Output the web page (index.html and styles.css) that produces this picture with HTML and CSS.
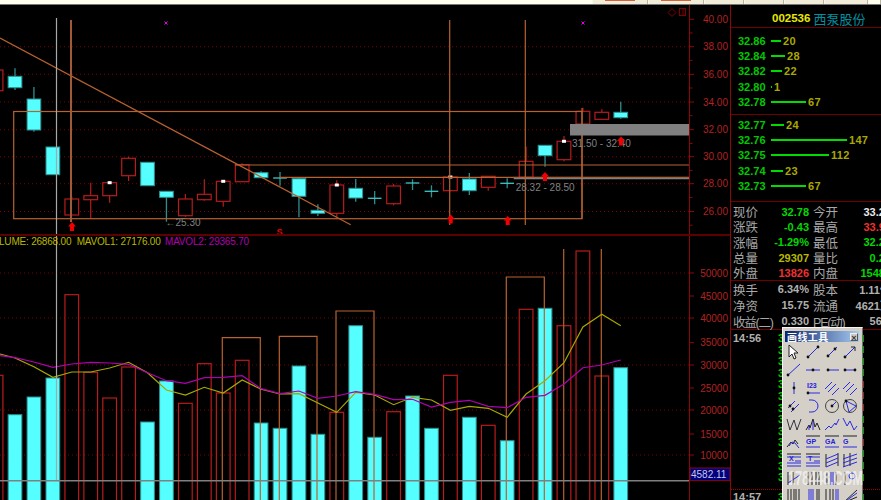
FILE: index.html
```html
<!DOCTYPE html>
<html lang="zh">
<head>
  <meta charset="UTF-8">
  <title>002536 西泵股份</title>
  <link rel="stylesheet" href="styles.css">
</head>
<body>

  <div class="topbar">
    <div class="tab tab-a"><i></i></div>
    <div class="tab tab-a"><i></i></div>
    <div class="tab tab-b"></div>
    <div class="tab tab-b"></div>
    <div class="tab tab-b"></div>
    <div class="tab tab-c"></div>
    <div class="tab tab-d"></div>
  </div>

  <div class="workspace">
    <svg id="chart" class="chart" viewBox="0 5 730 495"></svg>

    <div class="side">
      <div class="title"><span class="code">002536</span><span class="name">西泵股份</span></div>

      <div class="book book-sell">
        <div class="level"><span class="price">32.86</span><i style="width:10px"></i><span class="qty">20</span></div>
        <div class="level"><span class="price">32.84</span><i style="width:14px"></i><span class="qty">28</span></div>
        <div class="level"><span class="price">32.82</span><i style="width:11px"></i><span class="qty">22</span></div>
        <div class="level"><span class="price">32.80</span><i style="width:1px"></i><span class="qty">1</span></div>
        <div class="level"><span class="price">32.78</span><i style="width:35px"></i><span class="qty">67</span></div>
      </div>
      <div class="book book-buy">
        <div class="level"><span class="price">32.77</span><i style="width:13px"></i><span class="qty">24</span></div>
        <div class="level"><span class="price">32.76</span><i style="width:76px"></i><span class="qty">147</span></div>
        <div class="level"><span class="price">32.75</span><i style="width:58px"></i><span class="qty">112</span></div>
        <div class="level"><span class="price">32.74</span><i style="width:12px"></i><span class="qty">23</span></div>
        <div class="level"><span class="price">32.73</span><i style="width:35px"></i><span class="qty">67</span></div>
      </div>

      <div class="stats stats-quote">
        <span>现价</span><b class="green">32.78</b><span>今开</span><b class="white">33.21</b>
        <span>涨跌</span><b class="green">-0.43</b><span>最高</span><b class="red">33.95</b>
        <span>涨幅</span><b class="green">-1.29%</b><span>最低</span><b class="green">32.21</b>
        <span>总量</span><b class="yellow">29307</b><span>量比</span><b class="green">0.28</b>
        <span>外盘</span><b class="red">13826</b><span>内盘</span><b class="green">15481</b>
      </div>
      <div class="stats stats-base">
        <span>换手</span><b>6.34%</b><span>股本</span><b>1.11亿</b>
        <span>净资</span><b>15.75</b><span>流通</span><b>4621万</b>
        <span class="tight">收益(二)</span><b>0.330</b><span class="tight">PE(动)</span><b>56.1</b>
      </div>

      <div class="tape">
        <div class="tick"><span class="time">14:56</span><span class="tprice">32.78</span><i class="up"></i></div>
        <div class="tick"><span class="time"></span><span class="tprice">32.78</span><i class="up"></i></div>
        <div class="tick"><span class="time"></span><span class="tprice">32.78</span><i class="up"></i></div>
        <div class="tick"><span class="time"></span><span class="tprice">32.77</span><i class="up"></i></div>
        <div class="tick"><span class="time"></span><span class="tprice">32.78</span><i class="down"></i></div>
        <div class="tick"><span class="time"></span><span class="tprice">32.78</span><i class="down"></i></div>
        <div class="tick"><span class="time"></span><span class="tprice">32.77</span><i class="down"></i></div>
        <div class="tick"><span class="time"></span><span class="tprice">32.78</span><i class="up"></i></div>
        <div class="tick"><span class="time"></span><span class="tprice">32.78</span><i class="up"></i></div>
        <div class="tick"><span class="time"></span><span class="tprice">32.77</span><i class="down"></i></div>
        <div class="tick"><span class="time"></span><span class="tprice">32.78</span><i class="up"></i></div>
        <div class="tick"><span class="time"></span><span class="tprice">32.78</span><i class="up"></i></div>
        <div class="tick"><span class="time"></span><span class="tprice">32.78</span><i class="up"></i></div>
      </div>
      <div class="tape tape-next">
        <div class="tick"><span class="time">14:57</span><span class="tprice">32.78</span><i class="up"></i></div>
      </div>
    </div>
  </div>

  <!-- floating drawing tools window -->
  <div class="tools">
    <div class="tools-title"><span>画线工具</span><em>×</em></div>
    <div id="toolgrid" class="tools-grid"></div>
  </div>
  <div class="mark">178448.COM</div>

  <script src="chart.js"></script>
</body>
</html>
```

FILE: styles.css
```css
html, body {
  margin: 0;
  height: 100%;
}
body {
  width: 881px;
  height: 500px;
  overflow: hidden;
  background: #000;
  color: #c0c0c0;
  font-family: "Liberation Sans", "Noto Sans CJK SC", sans-serif;
  display: flex;
  flex-direction: column;
  position: relative;
}

/* top strip, only the foot of the window above shows */
.topbar {
  height: 4px;
  flex: none;
  display: flex;
  padding-left: 592px;
  background: #fffff0;
  border-bottom: 1px solid #777;
}
.tab {
  box-sizing: border-box;
  border-right: 1px solid #b8b4a0;
  border-left: 1px solid #f8f8f0;
  background: #f2edd8;
}
.tab i {
  display: block;
  width: 30px;
  height: 1px;
  margin: 0 auto;
  background: #d8603c;
}
.tab-a { width: 56px; }
.tab-b { width: 40px; }
.tab-c { width: 44px; }
.tab-d { width: 13px; background: #fffff0; }

.workspace {
  flex: 1;
  display: flex;
  min-height: 0;
}
.chart {
  width: 730px;
  height: 495px;
  flex: none;
  display: block;
}
.chart text {
  font-size: 10px;
}
.axis-label { fill: #b02222; text-anchor: end; }
.info-yellow { fill: #b8b800; letter-spacing: -.2px; }
.info-purple { fill: #b000b0; letter-spacing: -.2px; }
.note { fill: #808080; }

/* right panel */
.side {
  flex: none;
  width: 161px;
  border-left: 1px solid #8c0808;
  overflow: hidden;
  font-size: 11px;
  font-weight: bold;
}
.title {
  height: 23px;
  box-sizing: border-box;
  padding: 4px 0 0 41px;
  display: flex;
  align-items: center;
  gap: 3px;
  border-bottom: 1px solid #700000;
}
.code {
  color: #e8e800;
  font-size: 11.5px;
}
.name {
  color: #0090a0;
  font-size: 13px;
  font-weight: normal;
}
.book {
  box-sizing: border-box;
  padding-left: 7px;
}
.book-sell {
  height: 87px;
  padding-top: 5px;
  border-bottom: 1px solid #700000;
}
.book-buy {
  height: 86px;
  padding-top: 2px;
}
.level {
  height: 15.4px;
  display: flex;
  align-items: center;
}
.level i {
  height: 2px;
  background: #00dc00;
  margin-right: 2px;
}
.price {
  width: 33px;
  color: #00c800;
}
.qty {
  color: #a8a800;
  letter-spacing: .3px;
}

.stats {
  display: grid;
  grid-template-columns: 30px 46px 30px 52px;
  column-gap: 0;
  padding-left: 2px;
  align-items: center;
  white-space: nowrap;
  box-sizing: border-box;
  border-top: 1px solid #700000;
}
.stats span {
  font-size: 12.5px;
  font-weight: normal;
  color: #a8a8a8;
}
.stats span:nth-child(4n+3) {
  padding-left: 4px;
}
.stats .tight {
  letter-spacing: -1.2px;
}
.stats b {
  text-align: right;
  color: #b0b0b0;
}
.stats-quote {
  height: 79px;
  grid-auto-rows: 15.3px;
  padding-top: 2px;
}
.stats-base {
  height: 49px;
  grid-auto-rows: 16px;
}
.green { color: #00d800 !important; }
.white { color: #e8e8e8 !important; }
.red { color: #f03030 !important; }
.yellow { color: #b8b800 !important; }

.tape {
  box-sizing: border-box;
  height: 160px;
  padding-top: 2px;
  border-top: 1px solid #700000;
}
.tape-next {
  padding-top: 1px;
  height: 12px;
  border-top: 1px dotted #a00000;
}
.tick {
  height: 11.6px;
  display: grid;
  grid-template-columns: 45px 84px 2px;
  padding-left: 2px;
  align-items: center;
}
.tick i {
  height: 7px;
}
.tick .up { background: #00a000; }
.tick .down { background: #a02020; }
.time {
  color: #b0b0b0;
}
.tprice {
  color: #00c800;
}

/* floating window, lies over the panel */
.tools {
  position: absolute;
  left: 782px;
  top: 327px;
  width: 81px;
  height: 190px;
  box-sizing: border-box;
  padding: 3px 3px 0 2px;
  background: #d4d0c8;
  border-top: 1px solid #f4f4f0;
  border-left: 1px solid #f4f4f0;
  border-right: 1px solid #707070;
}
.tools-title {
  height: 11px;
  display: flex;
  align-items: center;
  justify-content: space-between;
  padding: 0 1px 0 2px;
  background: linear-gradient(90deg, #0a246a, #a6caf0);
  color: #fff;
  font-size: 10px;
  font-weight: bold;
  letter-spacing: .4px;
}
.tools-title em {
  width: 8px;
  height: 8px;
  font-style: normal;
  font-size: 9px;
  line-height: 8px;
  text-align: center;
  letter-spacing: 0;
  color: #333;
  background: #cfcbc2;
  border: 1px solid #eee;
  border-right-color: #555;
  border-bottom-color: #555;
  box-sizing: border-box;
}
.tools-grid {
  display: grid;
  grid-template-columns: repeat(4, 18.8px);
  grid-auto-rows: 18px;
  margin-top: 1px;
}
.tools-grid svg {
  width: 16px;
  height: 16px;
  margin: 1px;
  display: block;
}
.tools-grid text {
  font-size: 7px;
  font-weight: bold;
  fill: #2222dd;
}
.mark {
  position: absolute;
  left: 788px;
  top: 467px;
  transform: scaleX(.63);
  transform-origin: left top;
  font-size: 20px;
  font-weight: bold;
  color: rgba(255, 255, 255, .62);
  white-space: nowrap;
}
```

FILE: chart.js
```js
const chart = document.getElementById("chart");
const toolgrid = document.getElementById("toolgrid");

const ORANGE = "#b8622f";
const RED = "#b81c1c";
const CYAN = "#55ffff";
const TEAL = "#2f8f8f";

// kind, wick top, body top, body bottom, wick bottom, volume top, white dot
const bars = [
  ["r", 68, 70, 90.7, 92, 375.3],
  ["c", 68.3, 76.3, 87.7, 90, 414.7],
  ["c", 87, 99, 130, 131.7, 397],
  ["c", 147, 147, 174.7, 174.7, 378],
  ["r", 196.7, 199, 215, 215, 294.7],
  ["r", 182.7, 195.7, 199.7, 218.3, 372.3],
  ["r", 181, 182.7, 195.7, 202.7, 398, 1],
  ["r", 156.7, 158.3, 175.7, 181, 367],
  ["c", 162.3, 162.3, 185.7, 185.7, 422],
  ["c", 191.3, 191.3, 197.3, 221.7, 381],
  ["r", 194, 199, 215.7, 216.7, 403.3],
  ["r", 179.3, 194.3, 199.7, 200.7, 363.7],
  ["r", 180, 181.3, 201.3, 206.7, 393, 1],
  ["r", 163.3, 164.7, 181.7, 181.7, 360.3],
  ["c", 171.3, 172.7, 177.7, 177.7, 423],
  ["x", 172, 178, 178, 185.7, 428.3],
  ["c", 177.7, 178.7, 196.3, 217.3, 366],
  ["c", 204.3, 210.3, 213.3, 216, 434.3],
  ["r", 180.3, 185, 213.3, 217.3, 412.3, 1],
  ["c", 179, 188.3, 198, 201.7, 325.7],
  ["x", 191, 198.3, 198.3, 204.3, 437.3],
  ["r", 184, 186, 203.7, 205.3, 411.7],
  ["x", 179.3, 183, 183, 190, 396],
  ["x", 185.3, 191.3, 191.3, 197.3, 428.3],
  ["r", 176, 177, 190.7, 190.7, 375.3, 1],
  ["c", 173, 179, 190.7, 195, 417.3],
  ["r", 176.3, 176.3, 187.3, 190.7, 425.3],
  ["x", 178.3, 183.3, 183.3, 188.3, 440.7],
  ["r", 146.7, 161.3, 177.3, 177.3, 309.3],
  ["c", 145.3, 145.3, 155.7, 166.7, 308.3],
  ["r", 136, 141.3, 159.7, 161.3, 325.7, 1],
  ["r", 107.7, 111.3, 124, 124, 251],
  ["r", 109.3, 112.3, 119.3, 119.3, 376],
  ["c", 101.7, 112.3, 117.7, 118.7, 367.7]
];

const mavol1 = [354, 358, 366.7, 377.3, 372, 372, 368, 362.3, 372.7, 390, 395, 387.3, 393, 380, 389.3, 394, 393.7,
  403, 412.3, 392.3, 395, 404.7, 397.3, 400, 410.3, 406.3, 408.3, 417.3, 394, 380.7, 362.7, 327, 314.3, 325.7];
const mavol2 = [355.7, 357.7, 362, 367.3, 364, 362.3, 363, 364.3, 372.7, 380.7, 383.3, 377.7, 377.3, 375.7, 388.7,
  393.7, 391, 398.3, 396, 391.7, 394.3, 399.7, 399.3, 407, 402.3, 400.3, 406.3, 407.7, 397.3, 395.3, 384, 367.7, 365, 360];

const priceLabels = [["40.00", 19.3], ["38.00", 46.7], ["36.00", 74.3], ["34.00", 102], ["32.00", 129.7],
  ["30.00", 156.7], ["28.00", 183.7], ["26.00", 211.5]];
const volLabels = [["50000", 273], ["45000", 296], ["40000", 318], ["35000", 342.7], ["30000", 365],
  ["25000", 388], ["20000", 410], ["15000", 434], ["10000", 455]];

let out = "";

function line(x1, y1, x2, y2, color, width, extra) {
  out += `<line x1="${x1}" y1="${y1}" x2="${x2}" y2="${y2}" stroke="${color}" stroke-width="${width || 1}" ${extra || ""}/>`;
}
function rect(x, y, w, h, fill, stroke, width) {
  out += `<rect x="${x}" y="${y}" width="${w}" height="${h}" fill="${fill}" stroke="${stroke || "none"}" stroke-width="${width || 1}"/>`;
}
function text(x, y, str, cls) {
  out += `<text x="${x}" y="${y}" class="${cls}">${str}</text>`;
}
function barX(i) {
  return 15 + 18.93 * (i - 1);
}
function arrow(x, y) {
  out += `<path d="M${x} ${y}l4 4.5h-2v4.5h-4v-4.5h-2z" fill="#f00000"/>`;
}
function cross(x, y) {
  out += `<path d="M${x - 1.5} ${y - 1.5}l3 3m0-3l-3 3" stroke="#e000e0" fill="none"/>`;
}
function maLine(values, color) {
  const pts = values.map((y, i) => (i === 0 ? 0 : barX(i).toFixed(1)) + "," + y).join(" ");
  out += `<polyline points="${pts}" fill="none" stroke="${color}" stroke-width="1.2"/>`;
}

// dotted grid
priceLabels.slice(1).forEach(p => line(0, p[1], 689, p[1], "#780000", 1, 'stroke-dasharray="1 3"'));
volLabels.filter((v, i) => i % 2 === 0).forEach(v => line(0, v[1], 689, v[1], "#780000", 1, 'stroke-dasharray="1 3"'));

// volume
bars.forEach((b, i) => {
  const x = barX(i) - 6.85;
  if (b[0] === "r") {
    rect(x, b[5], 13.7, 520 - b[5], "none", RED, 1.2);
  } else {
    rect(x, b[5], 13.7, 520 - b[5], CYAN, TEAL, 1);
  }
});

// open boxes drawn over the volume
[[222.3, 260.3, 337.7], [279.3, 317, 336.3], [336, 374, 311], [506.3, 544.3, 277]].forEach(o => {
  out += `<path d="M${o[0]} 510V${o[2]}H${o[1]}V510" fill="none" stroke="${ORANGE}" stroke-width="1.2"/>`;
});
line(563.7, 249, 563.7, 510, ORANGE, 1.2);
line(601.3, 249, 601.3, 510, ORANGE, 1.2);

maLine(mavol1, "#a8a800");
maLine(mavol2, "#b000b0");

// candles
bars.forEach((b, i) => {
  const x = barX(i);
  if (b[0] === "r") {
    line(x, b[1], x, b[4], RED, 1.2);
    rect(x - 6.85, b[2], 13.7, b[3] - b[2], "#000", RED, 1.2);
  } else if (b[0] === "c") {
    line(x, b[1], x, b[4], TEAL, 1.3);
    rect(x - 6.85, b[2], 13.7, b[3] - b[2], CYAN, TEAL, 1);
  } else {
    line(x, b[1], x, b[4], TEAL, 1.3);
    line(x - 6.85, b[2], x + 6.85, b[2], "#3cc8c8", 1.3);
  }
  if (b[6]) {
    rect(x - 2, b[2] - 1.5, 4, 3, "#fff");
  }
});

// drawn studies
rect(13.7, 111.5, 568.3, 107.2, "none", ORANGE, 1.2);
line(582, 108, 582, 218.7, ORANGE, 1.2);
line(0, 38, 350.7, 224.7, ORANGE, 1.2);
line(235, 165, 689, 165, ORANGE, 1.2);
line(280, 177.3, 514, 177.3, ORANGE, 1.2);
line(513.7, 178.3, 689, 178.3, "#808080", 2);
line(513.7, 177.2, 689, 177.2, ORANGE, 1);
rect(570, 124, 119, 11.5, "#808080");
line(56.5, 18, 56.5, 480, "#a8a8a8", 1.2);
line(71, 20, 71, 222, "#a05a38", 2);
line(449.7, 20, 449.7, 225, ORANGE, 1.2);
line(525.3, 20, 525.3, 225, ORANGE, 1.2);
line(0, 480.7, 689, 480.7, "#808080", 1.5);

text(165.5, 225.5, "←25.30", "note");
text(572, 146.5, "31.50 - 32.40", "note");
text(515.7, 190.5, "28.32 - 28.50", "note");

arrow(72, 222);
arrow(450.7, 214.5);
arrow(507.7, 216);
arrow(545, 172);
arrow(621, 136.5);
out += `<text x="276.5" y="234.5" style="font-size:9px;font-weight:bold;fill:#e00000">S</text>`;

cross(166, 23);
cross(583, 23);
out += `<path d="M672 8.5l4 4-4 4-4-4z" fill="none" stroke="#800000"/>`;
rect(679.5, 8.5, 6, 7, "none", "#800000");
line(683, 8.5, 683, 15.5, "#800000");

// axis
line(689.5, 5, 689.5, 500, "#8c0808");
line(0, 235, 730, 235, "#5c0000", 2);
priceLabels.forEach((p, i) => {
  line(689.5, p[1], 694, p[1], "#8c0808");
  line(689.5, p[1] + 13.7, 692.5, p[1] + 13.7, "#8c0808");
  text(728, p[1] + 3.6, p[0], "axis-label");
});
volLabels.forEach(v => {
  line(689.5, v[1], 694, v[1], "#8c0808");
  text(728, v[1] + 3.6, v[0], "axis-label");
});
rect(690, 468, 40, 12.7, "#000080", "#8c0808");
out += `<text x="691" y="478" style="fill:#c8c8e0">4582.11</text>`;

text(-1, 245, "LUME: 26868.00", "info-yellow");
text(76.7, 245, "MAVOL1: 27176.00", "info-yellow");
text(165, 245, "MAVOL2: 29365.70", "info-purple");

chart.innerHTML = out;

// drawing tools, 16x16 icons
const B = 'fill="none" stroke="#2a2ae0"';
const K = 'fill="none" stroke="#222"';
const dot = (x, y) => `<circle cx="${x}" cy="${y}" r="1.4" fill="#111"/>`;
const bl = d => `<path d="${d}" ${B}/>`;
const kl = d => `<path d="${d}" ${K}/>`;
const bars3 = d => kl(d) + bl("M2 13L14 5");

const tools = [
  '<path d="M3 1v12l3-3 2 5 2-1-2-5h4z" fill="#fff" stroke="#222"/>',
  bl("M3 13L13 3") + dot(3, 13) + dot(13, 3),
  bl("M3 13L13 3") + dot(4, 12) + dot(11, 5),
  bl("M3 13L13 3") + kl("M9 3h4v4") + dot(3, 13),
  bl("M1 14L14 2") + dot(2, 13),
  bl("M1 8h14") + dot(8, 8),
  bl("M3 8h12") + dot(4, 8),
  bl("M2 8h12") + dot(3, 8) + dot(13, 8),
  bl("M8 2v12") + dot(8, 8),
  '<text x="2" y="8">I23</text>' + bl("M2 13h13") + dot(3, 13),
  bl("M1 9L8 2M4 12L12 4M8 15L15 8"),
  bl("M1 9L8 2M4 12L12 4M8 15L15 8"),
  bl("M2 10L9 3M5 14L13 6") + dot(4, 8) + dot(7, 11),
  bl("M4 2h3a6 6 0 0 1 0 12H4"),
  '<circle cx="8" cy="8" r="6.5" fill="none" stroke="#444"/>' + bl("M8 8L12 4") + dot(8, 8),
  '<circle cx="8" cy="8" r="6.5" fill="none" stroke="#444"/>' + bl("M4 3L14 8 7 14z") + dot(4, 3),
  '<path d="M1 3l3 11 4-10 3 10 4-11" fill="none" stroke="#334"/>',
  kl("M1 14l3-5 1 3 3-9 2 8 2-4 3 7") + bl("M4 14V9M8 14V5"),
  bl("M1 14l4-4 2 2 4-5 1 2 3-6"),
  bl("M1 2l4 8 3-5 4 9 3-4") ,
  kl("M1 13l4-5 2 2 2-4 3 4") + bl("M3 12l3-4 3 1 4 5"),
  '<text x="1" y="9.5">GP</text>' + kl("M1 2h14") + bl("M1 13h14"),
  '<text x="1" y="9.5">GA</text>' + kl("M1 2h14") + bl("M1 13h14"),
  '<text x="1" y="9.5">G</text>' + kl("M1 2h14") + bl("M1 13h14"),
  '<text x="3" y="9">X</text>' + kl("M1 2h14") + bl("M1 5h14M9 9h6M1 11h14M1 14h14"),
  '<text x="3" y="9">T</text>' + kl("M1 2h14") + bl("M1 5h14M9 9h6M1 11h14M1 14h14"),
  kl("M2 2v13M14 1v13") + bl("M2 7L14 2M2 11L14 6M2 15L14 10"),
  kl("M2 2v13M8 1v13") + bl("M1 7L15 2M1 11L15 6M1 15L15 10"),
  bars3("M2 2v13M7 2v13"),
  kl("M3 2v13M7 2v13M11 2v13M14 2v13"),
  kl("M3 2v13M12 2v13") + bl("M7 2v13M9 2v13"),
  kl("M3 2v13") + '<circle cx="10" cy="6" r="3" fill="none" stroke="#2a2ae0"/>',
  kl("M2 1v15M5 1v15M8 1v15M10 1v15M13 1v15"),
  bl("M4 1v15M6 1v15M8 1v15") + kl("M12 1v15M14 1v15"),
  kl("M2 1v15M6 1v15M9 1v15") + bl("M12 1v15M14 1v15"),
  kl("M1 15L15 2M1 15L15 9") + bl("M1 15L15 5")
];

let icons = "";
tools.forEach(t => {
  icons += `<svg viewBox="0 0 16 16">${t}</svg>`;
});
toolgrid.innerHTML = icons;
```
